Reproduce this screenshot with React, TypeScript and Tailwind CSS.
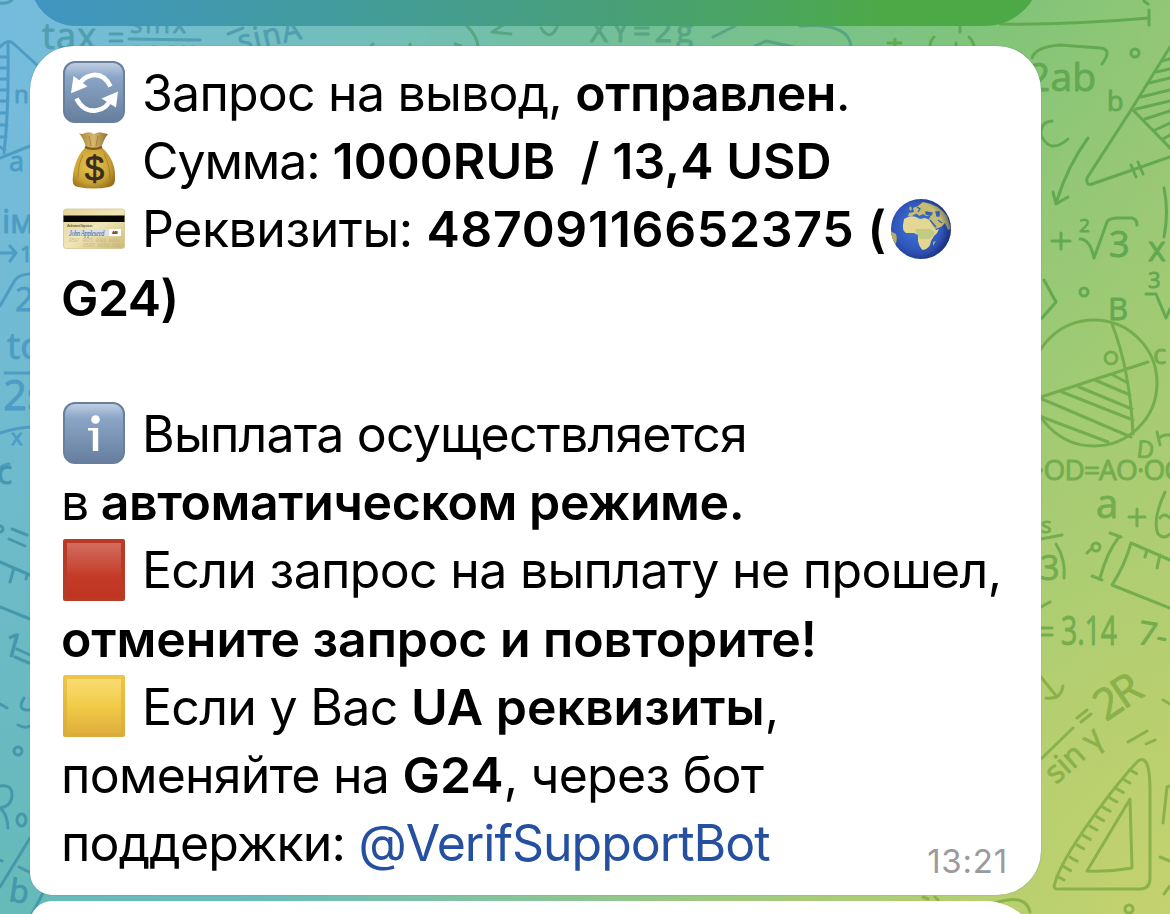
import type { ReactNode } from "react";

const RefreshIcon = () => (
  <svg viewBox="0 0 62 62" className="w-[62px] h-[62px] shrink-0 -mt-[2px]">
    <defs>
      <linearGradient id="keycap" x1="0" y1="0" x2="0" y2="1">
        <stop offset="0" stopColor="#c3d2e4" />
        <stop offset="0.25" stopColor="#8aa5c6" />
        <stop offset="1" stopColor="#677e9d" />
      </linearGradient>
    </defs>
    <rect x="1" y="1" width="60" height="60" rx="11" fill="url(#keycap)" stroke="#687f9d" strokeWidth="2" />
    <g fill="none" stroke="#fff" strokeWidth="4.600">
      <path d="M47.500 25.500C43 16.500 36 13 29 14.200C22 15.500 18 19 15.500 25" />
      <path d="M13.500 37.500C18 46.500 25 50.500 33 49.500C41 48.500 46 43 48 37" />
    </g>
    <path d="M10.500 15L8 32.200L24.500 25.500ZM55 30.500L38.500 37.500L53 46.500Z" fill="#fff" />
  </svg>
);

const InfoIcon = () => (
  <svg viewBox="0 0 62 62" className="w-[62px] h-[62px] shrink-0 -mt-[3px]">
    <rect x="1" y="1" width="60" height="60" rx="11" fill="url(#keycap)" stroke="#687f9d" strokeWidth="2" />
    <circle cx="32.500" cy="17.500" r="4.300" fill="#fff" />
    <path d="M25 26H35.200V49H29.800V28.500H25Z" fill="#fff" />
  </svg>
);

const MoneyBagIcon = () => (
  <svg viewBox="0 0 62 62" className="w-[62px] h-[62px] shrink-0">
    <defs>
      <radialGradient id="bag" cx="0.45" cy="0.45" r="0.62">
        <stop offset="0" stopColor="#e6c64e" />
        <stop offset="0.65" stopColor="#cda535" />
        <stop offset="1" stopColor="#9b721f" />
      </radialGradient>
      <linearGradient id="neck">
        <stop offset="0" stopColor="#a58238" />
        <stop offset="0.5" stopColor="#d8b96c" />
        <stop offset="1" stopColor="#8f6d30" />
      </linearGradient>
    </defs>
    <path d="M16 3Q19 5 22 3Q27 1 31 4Q36 1 40 3L45 4Q41 9 38 18H23Q21 9 16 3Z" fill="url(#neck)" />
    <path d="M23 17H38C45 22 53 34 52 47Q53 56 46 57Q31 60 15 57Q8 56 10 46C11 33 17 22 23 17Z" fill="url(#bag)" />
    <path d="M26 6L28 16M35 6L33 16M20 25Q15 34 15 48M41 24Q47 35 47 49" fill="none" stroke="#8f6a20" strokeWidth="1" opacity="0.6" />
    <path d="M22 17Q30 21 39 17" fill="none" stroke="#7d5a22" strokeWidth="2.200" />
    <text x="31" y="50.500" textAnchor="middle" className="font-['Liberation_Sans',sans-serif] text-[35px]" fill="#3a2a20" stroke="#3a2a20" strokeWidth="0.700">$</text>
  </svg>
);

const CardIcon = () => (
  <svg viewBox="0 0 62 42" className="w-[62px] h-[42px] shrink-0">
    <defs>
      <linearGradient id="card" x1="0" y1="0" x2="1" y2="1">
        <stop offset="0" stopColor="#e3d596" />
        <stop offset="0.5" stopColor="#f0e6b8" />
        <stop offset="1" stopColor="#cdb970" />
      </linearGradient>
    </defs>
    <rect x="0.500" y="1" width="61" height="39.500" rx="2.500" fill="url(#card)" stroke="#d3c592" strokeWidth="0.800" />
    <rect x="0.500" y="7.500" width="61" height="6.500" fill="#060606" />
    <rect x="5" y="21" width="53" height="7" fill="#dedfe0" />
    <rect x="46" y="21" width="12" height="7" fill="#fafafa" />
    <text x="4" y="18.500" textLength="25" lengthAdjust="spacingAndGlyphs" className="font-['Liberation_Sans',sans-serif] text-[3px]" fill="#5c5230">Authorized Signature</text>
    <text x="6" y="28" textLength="35" lengthAdjust="spacingAndGlyphs" className="font-['Liberation_Serif',serif] italic text-[9px]" fill="#3463a4">John Appleseed</text>
    <text x="49" y="26" className="font-['Liberation_Sans',sans-serif] font-bold text-[4px]" fill="#222">448</text>
    <g fill="#c3b685" className="font-['Liberation_Mono',monospace] text-[4.500px]">
      <text x="6" y="33.500" textLength="50">8507 8875 0000 0000</text>
      <text x="20" y="38.500" textLength="37">8507 8850 000</text>
    </g>
  </svg>
);

const GlobeIcon = () => (
  <svg viewBox="0 0 62 62" className="w-[62px] h-[62px] shrink-0 -mt-px ml-[3px]">
    <defs>
      <radialGradient id="ocean" cx="0.45" cy="0.45" r="0.55">
        <stop offset="0" stopColor="#4379d8" />
        <stop offset="0.7" stopColor="#3158bd" />
        <stop offset="1" stopColor="#24409a" />
      </radialGradient>
      <radialGradient id="globe-shade" cx="0.4" cy="0.5" r="0.6">
        <stop offset="0.75" stopColor="#14265a" stopOpacity="0" />
        <stop offset="1" stopColor="#14265a" stopOpacity="0.5" />
      </radialGradient>
      <clipPath id="globe-clip">
        <circle cx="31" cy="31" r="30" />
      </clipPath>
    </defs>
    <circle cx="31" cy="31" r="30" fill="url(#ocean)" />
    <g clipPath="url(#globe-clip)">
      <path d="M14 21Q20 17 26 19L30 21L35 20L40 22L43 28L46 32L49 31Q48 35 44 38L41 43Q40 51 33 52Q30 51 28 43L28 37L24 35L16 35Q12 32 13 27Z" fill="#e2d793" />
      <path d="M25 31L40 31L45 34L43 38L39 41L30 41L27 36Z" fill="#b4c67a" opacity="0.7" />
      <path d="M19 15L24 14L23 10L28 8L33 4Q48 6 57 18L61 31L58 32L55 25L51 29L45 31L39 21L41 17L36 18L33 16L29 18L25 16L21 19L18 18Z" fill="#c6bd70" />
      <path d="M36 14L42 15L41 17L36 16ZM46 14L49 14L49 18L47 18ZM40 22L46 29M48 22L52 25" fill="#3560b5" stroke="#3560b5" strokeWidth="1.300" />
      <path d="M27 9L30 11L28 14M26 16L29 19" fill="none" stroke="#3560b5" strokeWidth="1.300" />
      <path d="M46 43L43 48L43 44Z" fill="#b5ad6d" />
      <path d="M0 33L6 36Q8 42 5 47L0 47Z" fill="#b9ad62" />
      <path d="M19 11L20 8L22 10L21 13Z" fill="#afb869" />
    </g>
    <circle cx="31" cy="31" r="30" fill="url(#globe-shade)" />
  </svg>
);

const RedSquare = () => (
  <span className="w-[62px] h-[62px] shrink-0 -mt-px rounded-[2px] bg-[#b93a26] p-[4px]">
    <span className="block w-full h-full bg-linear-to-b from-[#d36b5e] via-[#c33c28] via-60% to-[#bf3421]"></span>
  </span>
);

const YellowSquare = () => (
  <span className="w-[62px] h-[62px] shrink-0 -mt-px rounded-[2px] bg-linear-to-b from-[#eec644] to-[#dbab3a] p-[4px]">
    <span className="block w-full h-full bg-linear-to-b from-[#f9dc70] via-[#f1cb48] via-50% to-[#dfb03d]"></span>
  </span>
);

const toothMarks = Array.from({ length: 12 }, (_, i) => i);

// Maths doodles of the chat wallpaper
const Doodles = () => (
  <svg
    viewBox="0 0 1170 914"
    className="absolute inset-0 w-[1170px] h-[914px] font-['Open_Sans',sans-serif]"
    strokeWidth="3"
    strokeLinecap="round"
    strokeLinejoin="round"
    fill="none"
  >
    <g stroke="#4d9cc5">
      <path d="M0 47Q8 38 14 44L38 66M8 44Q9 110 4 153M0 158L30 146M0 57h8M0 68h8M0 79h8M0 90h8M0 101h8M0 113h7M0 125h7M0 137h6M0 147l5 3" />
      <path d="M0 253H16M10 246L16 253L10 261M0 306L15 280Q20 274 30 274M5 373H30M0 433Q15 428 30 427M0 468Q5 464 9 464" />
      <g fill="#4d9cc5" strokeWidth="0.900">
        <text x="14" y="103" className="text-[24px]">n</text>
        <text x="9" y="171" className="text-[27px]">a</text>
        <text x="2" y="233" className="text-[33px]">i</text>
        <text x="10" y="233" className="text-[33px]">м</text>
        <text x="20" y="262" className="text-[22px]">1</text>
        <text x="15" y="311" className="text-[33px]">2</text>
        <text x="7" y="359" className="text-[37px]">to</text>
        <text x="3" y="410" className="text-[42px]">2s</text>
        <text x="11" y="445" className="text-[22px]">x</text>
      </g>
    </g>
    <g stroke="#4598ab">
      <path d="M12 529L27 535M9 539L25 546M0 562L30 575M14 568L10 582M27 575L26 579M0 607L30 619M17 649L30 655M15 657L29 663M0 704L7 708M24 698Q16 711 30 710M18 725Q25 729 30 726" />
      <circle cx="0" cy="529" r="3" />
      <circle cx="18" cy="751" r="4" />
      <path d="M0 786Q12 784 12 795Q12 806 0 808Q7 813 8 828M0 887L30 838M19 867L29 872M0 860L2 861M32 914L43 893" />
      <ellipse cx="21.500" cy="820" rx="4.500" ry="6" />
      <g fill="#4598ab" strokeWidth="0.900">
        <text x="-3" y="484" className="text-[32px]">c</text>
        <text x="1" y="655" transform="rotate(15 5 655)" className="text-[33px]">1</text>
        <text x="9" y="902" transform="rotate(8 15 895)" className="text-[32px]">b</text>
      </g>
    </g>
    <g stroke="#509fb0">
      <path d="M0 3Q8 4 12 0M110 34H122M110 41H122M129 39L200 40M228 34L243 28" />
      <g fill="#509fb0" strokeWidth="0.900">
        <text x="42" y="49" textLength="54" className="text-[36px]">tax</text>
        <text x="130" y="33" textLength="56" className="text-[26px]">sinx</text>
        <text x="129" y="60" textLength="66" className="text-[26px]">cosx</text>
        <text x="240" y="52" textLength="64" transform="rotate(-12 240 52)" className="text-[30px]">sinA</text>
      </g>
    </g>
    <g stroke="#56a583">
      <path d="M467 26Q477 36 478 46M511 34L492 32L506 23M541 28Q550 42 557 27M713 37L735 26M800 26Q848 22 851 46M755 46L766 41L794 47M371 46L373 44M410 46V44M455 44L461 46" />
      <text x="590" y="42" textLength="103" className="text-[31px]" fill="#56a583" strokeWidth="0.900">XY=2g</text>
    </g>
    <g stroke="#62a952">
      <path d="M888 43H901M895 39V46M934 37Q930 41 930 46M969 37Q973 41 974 46M960 27V32M956 43V45M1000 24Q1070 25 1149 18M1149 10V25M1144 1L1148 4" />
      <path d="M1032 58Q1035 47 1060 45L1100 48Q1113 49 1102 64M1052 121Q1040 122 1041 135Q1050 155 1068 139M1088 138Q1068 165 1056 203M1053 192L1056 204L1068 197" />
      <circle cx="1135" cy="53" r="4" />
      <path d="M1170 47L1131 110L1087 178Q1086 186 1092 184L1170 157M1133 110L1170 148M1131 165L1136 177M1138 162L1143 174" />
      <path d="M1162 61L1170 59M1156 72L1170 69M1149 83L1170 78M1141 97L1170 90M1136 109L1170 101M1145 119L1170 111M1155 130L1170 123M1163 139L1170 135" />
      <path d="M1052 241H1070M1061 233V249M1080 239Q1090 239 1094 258L1107 222Q1109 218 1118 218H1132Q1137 219 1137 225M1164 188Q1169 212 1164 237" />
      <path d="M1146 294H1156L1166 318L1170 309M1044 280L1056 302L1042 318" />
      <circle cx="1084" cy="292" r="4" />
      <g fill="#62a952" strokeWidth="0.900">
        <text x="1028" y="91" textLength="68" className="text-[39px]">2ab</text>
        <text x="1107" y="111" className="text-[27px]">b</text>
        <text x="1079" y="232" className="text-[19px]">2</text>
        <text x="1109" y="257" className="text-[36px]">3</text>
        <text x="1148" y="261" className="text-[34px]">x</text>
        <text x="1148" y="288" className="text-[22px]">3</text>
        <text x="1108" y="320" className="text-[31px]">B</text>
      </g>
    </g>
    <g stroke="#74ad4e">
      <circle cx="1094" cy="383" r="63" />
      <path d="M1112 324Q1130 370 1133 434M1041 397L1148 362M1042 399L1131 437M1062 392L1133 420M1079 387L1132 409M1095 380L1130 395M1111 374L1128 383M1042 417L1108 442" />
      <circle cx="1111" cy="358" r="6" />
      <path d="M1157 432L1160 445M1159 438Q1164 434 1170 435M1129 517H1145M1137 509V526" />
      <path d="M1041 539L1062 535M1056 544Q1066 560 1064 578M1119 537Q1107 552 1100 578M1110 533L1121 537M1092 576L1102 580M1092 548L1087 553" />
      <circle cx="1096" cy="547" r="4" />
      <path d="M1170 560L1131 543Q1125 565 1112 585L1170 608M1147 550L1145 557M1160 555L1157 568M1041 607L1050 602M1042 628H1052M1042 635H1052M1165 492Q1152 520 1158 534Q1164 540 1170 534M1160 518Q1164 512 1170 518" />
      <g fill="#74ad4e" strokeWidth="0.900">
        <text x="1153" y="364" className="text-[28px]">c</text>
        <text x="1136" y="457" transform="rotate(6 1136 457)" className="text-[24px]">D</text>
        <text x="1037" y="480" textLength="145" className="text-[28px]">·OD=AO·OC</text>
        <text x="1096" y="518" className="text-[40px]">a</text>
        <text x="1041" y="533" className="text-[22px]">s</text>
        <text x="1040" y="580" className="text-[34px]">3</text>
        <text x="1061" y="645" textLength="56" lengthAdjust="spacingAndGlyphs" className="text-[40px]">3.14</text>
        <text x="1137" y="644" transform="rotate(10 1140 640)" className="text-[33px]">7-</text>
      </g>
    </g>
    <g stroke="#8bb24a">
      <path d="M1041 677L1057 697M1046 698Q1061 700 1063 686M1077 718L1087 710M1081 722L1091 714M1042 758L1073 728M1146 744L1155 740M1128 742L1147 731M1163 700L1170 704" />
      <path d="M1055 883C1062 855 1115 785 1138 761Q1150 753 1150 790V878Q1150 889 1140 889L1060 889Q1052 890 1055 883Z" />
      <path d="M1087 871L1130 799L1132 868Q1110 872 1087 871ZM1160 857L1170 861M1164 894L1170 886M1163 823L1167 787L1170 786" />
      {toothMarks.map((i) => (
        <path key={i} d={`M${1057 + i * 6.6} ${876 - i * 9.4 + (i > 2 ? -3 : 0)}q3 2 7 4`} />
      ))}
      <circle cx="1129" cy="909" r="4" />
      <path d="M995 903Q1026 893 1030 912M923 897L928 899M935 897L938 900" />
      <g fill="#8bb24a" strokeWidth="0.900">
        <text x="1106" y="722" transform="rotate(-34 1106 722)" textLength="48" className="text-[43px]">2R</text>
        <text x="1056" y="785" transform="rotate(-42 1056 785)" textLength="66" className="text-[31px]">sin γ</text>
      </g>
    </g>
  </svg>
);

type LineProps = {
  icon?: ReactNode;
  className?: string;
  children?: ReactNode;
};

const Line = ({ icon, className = "", children }: LineProps) => (
  <div className={`flex items-center h-[68.2px] whitespace-pre ${className}`}>
    {icon && <span className="flex items-center ml-[2px] mr-[17px]">{icon}</span>}
    <p>{children}</p>
  </div>
);

const Message = () => (
  <article className="w-[1011px] h-[849px] relative bg-white rounded-[44px] rounded-bl-[22px] pt-[13px] pl-[31px] shadow-[0_0_1px_rgba(0,60,60,0.5)]">
    <Line icon={<RefreshIcon />} className="tracking-[-0.78px]">
      Запрос на вывод, <b className="font-semibold tracking-[-0.45px]">отправлен</b>.
    </Line>
    <Line icon={<MoneyBagIcon />} className="tracking-[-1.1px]">
      Сумма: <b className="font-semibold tracking-[0.05px]">1000RUB  / 13,4 USD</b>
    </Line>
    <div className="flex items-center">
      <Line icon={<CardIcon />} className="tracking-[-0.45px]">
        Реквизиты: <b className="font-semibold tracking-[0.65px]">48709116652375 (</b>
      </Line>
      <GlobeIcon />
    </div>
    <Line>
      <b className="font-semibold tracking-[-0.5px]">G24)</b>
    </Line>
    <Line />
    <Line icon={<InfoIcon />} className="tracking-[-0.8px]">
      Выплата осуществляется
    </Line>
    <Line className="tracking-[-1.3px]">
      в <b className="font-semibold tracking-[-0.41px]">автоматическом режиме.</b>
    </Line>
    <Line icon={<RedSquare />} className="tracking-[-0.68px]">
      Если запрос на выплату не прошел,
    </Line>
    <Line>
      <b className="font-semibold tracking-[-0.07px]">отмените запрос и повторите!</b>
    </Line>
    <Line icon={<YellowSquare />} className="tracking-[-0.7px]">
      Если у Вас <b className="font-semibold tracking-normal">UA реквизиты</b>,
    </Line>
    <Line className="tracking-[-0.75px]">
      поменяйте на <b className="font-semibold tracking-normal">G24</b>, через бот
    </Line>
    <Line className="tracking-[-0.82px]">
      поддержки: <a className="text-[#24509f] tracking-[-1.02px]">@VerifSupportBot</a>
    </Line>
    <time className="absolute right-[33px] bottom-[14px] text-[33px] leading-[40px] tracking-[0.8px] text-[#9b9b9d]">
      13:21
    </time>
  </article>
);

const App = () => {
  return (
    <main className="relative w-[1170px] h-[914px] overflow-hidden bg-[radial-gradient(circle_at_100%_100%,#c4d26e_0%,#c4d26e00_62%),radial-gradient(circle_at_0%_100%,#66bab8_0%,#66bab800_55%),linear-gradient(to_right,#75bbde_0%,#72bfb5_35%,#72bf9a_52%,#80c47a_85%,#90c676_100%)] font-[Inter,sans-serif] text-[50px] leading-[68.2px] text-black">
      <Doodles />
      <div className="relative flex flex-col pl-[30px]">
        <div className="-mt-[54px] w-[1011px] h-[80px] rounded-bl-[46px] rounded-br-[56px] bg-linear-to-r from-[#4095c2] via-[#489f78] via-57% to-[#4da945] to-85%"></div>
        <div className="mt-[20px]">
          <Message />
        </div>
        <div className="mt-[6px] w-[1011px] h-[80px] bg-white rounded-tl-[22px] rounded-tr-[56px]"></div>
      </div>
    </main>
  );
};

export default App;
